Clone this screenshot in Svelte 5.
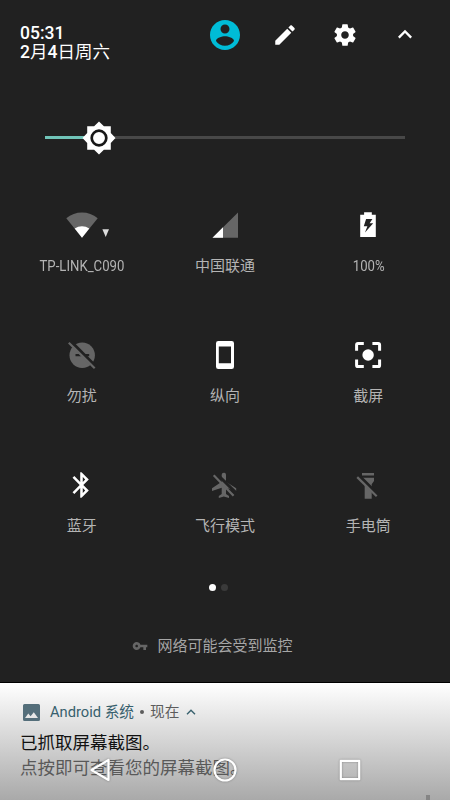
<script>
  const tiles = [
    {icon: 'wifi', label: 'TP-LINK_C090', latin: true},
    {icon: 'signal', label: '中国联通'},
    {icon: 'battery', label: '100%', latin: true},
    {icon: 'dnd', label: '勿扰'},
    {icon: 'portrait', label: '纵向'},
    {icon: 'capture', label: '截屏'},
    {icon: 'bluetooth', label: '蓝牙'},
    {icon: 'airplane', label: '飞行模式'},
    {icon: 'torch', label: '手电筒'}
  ];

  let brightness = $state(15);
  let page = $state(0);
</script>

<div class="screen">
  <section class="panel">
    <header>
      <div class="clock">
        <div>05:31</div>
        <div>2<span>月</span>4<span>日周六</span></div>
      </div>
      <button class="action" aria-label="用户">
        <svg width="36" height="36" viewBox="0 0 24 24" fill="#00bcd7">
          <path d="M12 2C6.48 2 2 6.48 2 12s4.480 10 10 10 10-4.480 10-10S17.520 2 12 2zm0 3c1.660 0 3 1.340 3 3s-1.340 3-3 3-3-1.340-3-3 1.340-3 3-3zm0 14.200c-2.500 0-4.710-1.280-6-3.220.03-1.990 4-3.080 6-3.080 1.990 0 5.970 1.090 6 3.080-1.290 1.940-3.500 3.220-6 3.220z" />
        </svg>
      </button>
      <button class="action" aria-label="编辑">
        <svg width="26" height="26" viewBox="0 0 24 24">
          <path d="M3 17.250V21h3.750L17.810 9.940l-3.750-3.750L3 17.250zM20.710 7.040c.39-.39.39-1.020 0-1.410l-2.340-2.340c-.39-.39-1.020-.39-1.410 0l-1.830 1.830 3.750 3.750 1.830-1.830z" />
        </svg>
      </button>
      <button class="action" aria-label="设置">
        <svg width="26" height="26" viewBox="0 0 24 24">
          <path d="M19.430 12.980c.04-.32.07-.64.07-.98s-.03-.66-.07-.98l2.110-1.650c.19-.15.24-.42.12-.64l-2-3.460c-.12-.22-.39-.3-.61-.22l-2.490 1c-.52-.4-1.080-.73-1.690-.98l-.38-2.650C14.460 2.180 14.250 2 14 2h-4c-.25 0-.46.18-.49.42l-.38 2.650c-.61.25-1.170.59-1.690.98l-2.490-1c-.23-.09-.49 0-.61.22l-2 3.460c-.13.22-.07.49.12.64l2.110 1.650c-.04.32-.07.65-.07.98s.03.66.07.98l-2.110 1.650c-.19.15-.24.42-.12.64l2 3.460c.12.22.39.3.61.22l2.490-1c.52.4 1.080.73 1.690.98l.38 2.650c.03.24.24.42.49.42h4c.25 0 .46-.18.49-.42l.38-2.650c.61-.25 1.170-.59 1.690-.98l2.490 1c.23.09.49 0 .61-.22l2-3.460c.12-.22.07-.49-.12-.64l-2.110-1.650zM12 15.500c-1.930 0-3.500-1.570-3.500-3.500s1.570-3.500 3.500-3.500 3.500 1.570 3.500 3.500-1.570 3.500-3.500 3.500z" />
        </svg>
      </button>
      <button class="action" aria-label="收起">
        <svg width="28" height="28" viewBox="0 0 24 24">
          <path d="M12 7.500l-6 6 1.410 1.410L12 10.330l4.590 4.580L18 13.500z" />
        </svg>
      </button>
    </header>

    <div class="slider">
      <div class="filled" style:width="{brightness}%"></div>
      <svg class="thumb" width="34" height="34" viewBox="-17 -17 34 34">
        <path d="M0-16.500L4.900-11.800H11.800V-4.900L16.500 0L11.800 4.900V11.800H4.900L0 16.500L-4.900 11.800H-11.800V4.900L-16.500 0L-11.800-4.900V-11.800H-4.900z" />
        <circle r="7.300" fill="none" stroke="#171717" stroke-width="2.700" />
      </svg>
    </div>

    <div class="tiles">
      {#each tiles as tile}
        <div class="tile">
          <svg width="60" height="30" viewBox="-30 -15 60 30">
            {#if tile.icon === 'wifi'}
              <path class="dim" d="M0 12.700L-15.700-6.800Q-8.800-12.600 0-12.600T15.700-6.800z" />
              <path d="M0 12.700L-7.300 3.500Q-4 1.200 0 1.200T7.300 3.500z" />
              <path fill="#ddd" d="M20.400 4.200h6.600L23.700 12z" />
            {:else if tile.icon === 'signal'}
              <path class="dim" d="M-12.500 12.800L13-12.600V12.800z" />
              <path d="M-12.500 12.800L-2 2.300V12.800z" />
            {:else if tile.icon === 'battery'}
              <path fill-rule="evenodd" d="M-7.800-10.200H-3.900V-12.800H3.800V-10.200H7.800V12H-7.800zM-1.900-6L-4.200 1.200H-.6L-3 7.400L5.200-1.800H1.600L4.400-6z" />
            {:else if tile.icon === 'dnd'}
              <circle class="dim" cx=".2" cy=".2" r="12.700" />
              <path fill="#212121" d="M-6.500-1h4l2.200 2.200h-6.200zM2-1h5.200v2.200H4.200z" />
              <path class="cut" d="M-11.500-14L14.500 12" />
              <path class="slash" d="M-13.200-12.300L12.700 13.200" />
            {:else if tile.icon === 'portrait'}
              <path fill-rule="evenodd" d="M-6.700-14H6.700Q9-14 9-11.700V11.700Q9 14 6.700 14H-6.700Q-9 14-9 11.700V-11.700Q-9-14-6.700-14zM-6.200-8.500V8.300H6V-8.500z" />
            {:else if tile.icon === 'capture'}
              <circle cx=".1" r="5.700" />
              <path class="line" d="M-11.400-4.300V-10Q-11.400-11.400-10-11.400H-4.200M4.400-11.400H10.200Q11.600-11.400 11.600-10V-4.300M11.600 4.500V10.200Q11.600 11.600 10.200 11.600H4.400M-4.200 11.600H-10Q-11.400 11.600-11.400 10.200V4.500" />
            {:else if tile.icon === 'bluetooth'}
              <g transform="translate(-.5 0) scale(1.280) translate(-12 -12)">
                <path d="M17.710 7.710L12 2h-1v7.590L6.410 5 5 6.410 10.590 12 5 17.590 6.410 19 11 14.410V22h1l5.710-5.710-4.300-4.290 4.300-4.290zM13 5.830l1.880 1.880L13 9.590V5.830zm1.880 10.460L13 18.170v-3.760l1.880 1.880z" />
              </g>
            {:else if tile.icon === 'airplane'}
              <path class="dim" d="M-1.200-12.200Q.8-12.700 1-10.200V-3.300L11.200 3.300V6L1 2.800V9L4 11V13L-1.200 11.600L-6.200 13V11L-3.300 9V2.800L-13 6V3.300L-3.300-3.300V-10.200Q-3.200-12.200-1.200-12.200z" />
              <path class="cut" d="M-9.400-12.200L11.600 8.400" />
              <path class="slash" d="M-11.300-9.800L8.600 10.800" />
            {:else}
              <path class="dim" d="M-6-12H6V-9.500H-6zM-6-7.200H6V-4L3.700-.8V13.700H-3.300V-.8L-6-4z" />
              <path class="cut" d="M-9.200-9.600L10.700 10.200" />
              <path class="slash" d="M-10.800-7.900L8.700 11.300" />
            {/if}
          </svg>
          <span class:latin={tile.latin}>{tile.label}</span>
        </div>
      {/each}
    </div>

    <div class="dots">
      {#each [0, 1] as i}
        <i class:active={page === i}></i>
      {/each}
    </div>

    <footer>
      <svg width="16" height="16" viewBox="0 0 24 24">
        <path class="dim" d="M12.650 10C11.830 7.670 9.610 6 7 6c-3.310 0-6 2.690-6 6s2.690 6 6 6c2.610 0 4.830-1.670 5.650-4H17v4h4v-4h2v-4H12.650zM7 14c-1.100 0-2-.9-2-2s.9-2 2-2 2 .9 2 2-.9 2-2 2z" />
      </svg>
      <span>网络可能会受到监控</span>
    </footer>
  </section>

  <section class="notification">
    <div class="app">
      <svg width="17" height="17" viewBox="0 0 17 17">
        <path fill="#546e7a" fill-rule="evenodd" d="M1.500 0h14Q17 0 17 1.500v14Q17 17 15.500 17h-14Q0 17 0 15.500v-14Q0 0 1.500 0zM2 14H15L10.800 8.300L7.600 12.300L5.300 9.600z" />
      </svg>
      <span class="name">Android 系统</span>
      <i class="bullet"></i>
      <span class="when">现在</span>
      <svg class="chevron" width="10" height="6" viewBox="0 0 10 6">
        <path d="M1 5.200L5 1.200L9 5.200" fill="none" stroke="#37606d" stroke-width="1.400" />
      </svg>
    </div>
    <div class="title">已抓取屏幕截图。</div>
    <div class="body">点按即可查看您的屏幕截图。</div>
    <div class="next"></div>
  </section>

  <nav>
    <svg width="26" height="26" viewBox="-13 -13 26 26"><path d="M-8.500 0L8.500-10V10z" /></svg>
    <svg width="26" height="26" viewBox="-13 -13 26 26"><circle r="10.500" /></svg>
    <svg width="26" height="26" viewBox="-13 -13 26 26"><path d="M-9.200-9.200H9.200V9.200H-9.200z" /></svg>
  </nav>
</div>

<style>
  :global(body) {
    margin: 0;
  }

  .screen {
    position: relative;
    width: 450px;
    height: 800px;
    overflow: hidden;
    font-family: Roboto, "Noto Sans CJK SC", sans-serif;
    color: #fff;
  }

  svg {
    display: block;
    flex: none;
    fill: #fff;
  }

  .panel {
    box-sizing: border-box;
    height: 683px;
    background: #212121;
    border-bottom: 1px solid #000;
  }

  header {
    display: flex;
    height: 70px;
    padding-left: 20px;
  }

  .clock {
    flex: 1;
    padding-top: 24px;
    font-size: 17.5px;
    line-height: 19px;
    font-weight: 500;
  }

  .clock span {
    font-weight: 400;
  }

  .action {
    display: flex;
    align-items: center;
    justify-content: center;
    width: 60px;
    height: 70px;
    padding: 0;
    border: 0;
    background: none;
  }

  .action:last-child {
    margin-right: 15px;
  }

  .action:nth-child(2) svg {
    fill: #00bcd7;
  }

  .slider {
    position: relative;
    height: 3px;
    margin: 66px 45px 0;
    background: #484848;
  }

  .filled {
    height: 100%;
    background: #70c4b8;
  }

  .thumb {
    position: absolute;
    left: 36.7px;
    top: -15.5px;
  }

  .tiles {
    display: grid;
    grid-template-columns: repeat(3, 1fr);
    grid-auto-rows: 130px;
    margin: 71px 10px 0;
  }

  .tile {
    display: flex;
    flex-direction: column;
    align-items: center;
    gap: 15px;
    font-size: 15px;
    line-height: 22px;
    color: #b4b4b4;
  }

  .latin {
    font-size: 15.5px;
    transform: scaleX(.85);
  }

  .dim {
    fill: #666;
  }

  .cut,
  .slash,
  .line {
    fill: none;
    stroke: #fff;
    stroke-width: 3px;
  }

  .cut {
    stroke: #212121;
  }

  .slash {
    stroke: #666;
    stroke-width: 2.2px;
  }

  .dots {
    display: flex;
    justify-content: center;
    gap: 5px;
    margin: -16px 13px 0 0;
  }

  .dots i {
    width: 7px;
    height: 7px;
    border-radius: 50%;
    background: #3a3a3a;
  }

  .dots .active {
    background: #fff;
  }

  footer {
    display: flex;
    align-items: center;
    gap: 9.5px;
    margin: 44px 0 0 132px;
    font-size: 15px;
    line-height: 22px;
    color: #a6a6a6;
  }

  footer svg {
    margin-top: -1px;
  }

  .notification {
    box-sizing: border-box;
    height: 117px;
    padding: 18px 20px 0;
    background: linear-gradient(#fff, #a9a9a9);
  }

  .app {
    display: flex;
    align-items: center;
    height: 22px;
    padding-left: 3px;
    font-size: 14.7px;
    line-height: 20px;
  }

  .app span {
    margin-top: -1px;
  }

  .name {
    margin: 0 6px 0 10px;
    color: #37606d;
  }

  .bullet {
    width: 4px;
    height: 4px;
    margin-right: 6px;
    border-radius: 50%;
    background: #5c5c5c;
  }

  .when {
    color: #5c5c5c;
  }

  .chevron {
    margin-left: 7px;
  }

  .title,
  .body {
    font-size: 17.5px;
    line-height: 25px;
    white-space: nowrap;
  }

  .title {
    margin-top: 8px;
    color: #111;
  }

  .body {
    color: #595959;
  }

  .next {
    width: 4px;
    height: 5px;
    margin: 14px 0 0 406px;
    background: #858585;
  }

  nav {
    position: absolute;
    left: 0;
    right: 0;
    bottom: 17px;
    display: flex;
    justify-content: center;
    gap: 99px;
  }

  nav svg {
    fill: none;
    stroke: #fff;
    stroke-width: 2.200px;
    stroke-linejoin: round;
    filter: drop-shadow(0 0 1px rgba(0, 0, 0, .3));
  }
</style>
